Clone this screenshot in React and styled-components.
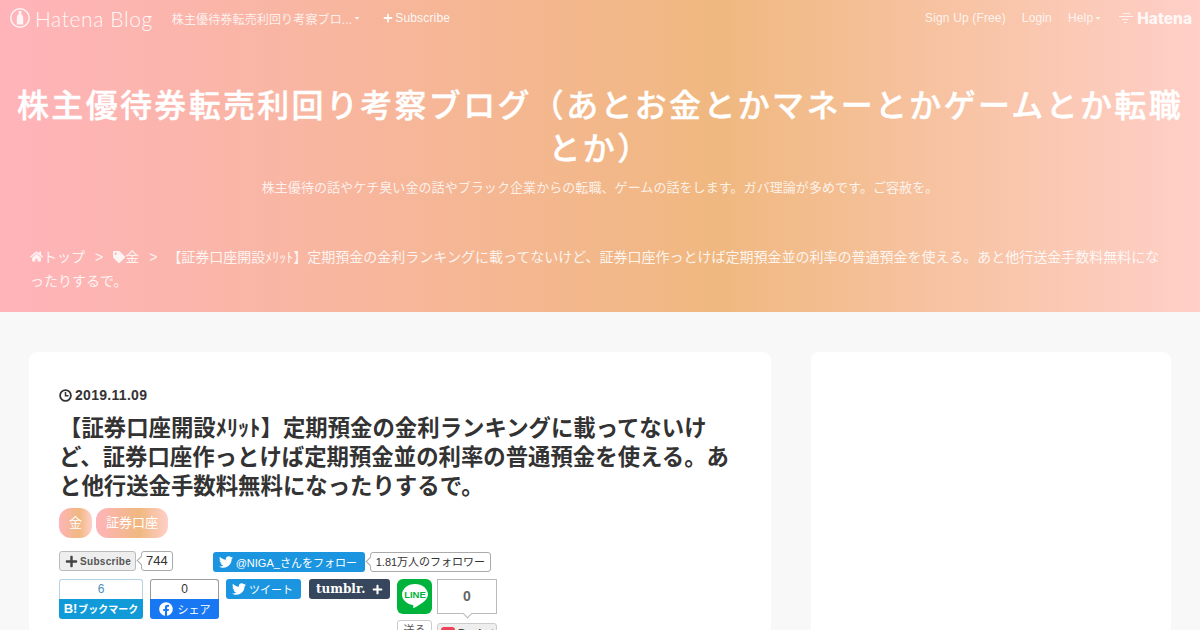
import React from 'react';
import styled, { createGlobalStyle } from 'styled-components';
import { FaTwitter, FaFacebook, FaHome, FaTag, FaPlus, FaCaretDown } from 'react-icons/fa';

const GlobalStyle = createGlobalStyle`
  html, body {
    margin: 0;
    padding: 0;
    background: #f8f8f8;
  }
  body {
    font-family: "Liberation Sans", "Noto Sans CJK JP", sans-serif;
    color: #333;
  }
`;

const App = () => {
  return (
    <Page>
      <GlobalStyle />
      <Header>
        <NavBar>
          <NavLeft>
            <BlogLogo>
              <svg width="20" height="20" viewBox="0 0 20 20">
                <circle cx="10" cy="10" r="9.200" fill="none" stroke="#fff" strokeWidth="1.500" opacity="0.85" />
                <path d="M8.600 3h2.800v3.400c1.100.7 1.800 1.700 1.800 3v7.100H6.800V9.400c0-1.300.7-2.300 1.800-3z" fill="#fff" opacity="0.85" />
              </svg>
              <LogoText>Hatena Blog</LogoText>
            </BlogLogo>
            <NavLink>
              株主優待券転売利回り考察ブロ...
              <Caret />
            </NavLink>
            <SubscribeLink>
              <FaPlus size={10} />
              Subscribe
            </SubscribeLink>
          </NavLeft>
          <NavRight>
            <NavLink>Sign Up (Free)</NavLink>
            <NavLink>Login</NavLink>
            <NavLink>
              Help
              <Caret />
            </NavLink>
            <HatenaMark>
              <svg width="16" height="13" viewBox="0 0 16 13">
                <path d="M5 1.500h7M1 4.500h14M4 7.500h6M6 10.500h3" stroke="#fff" strokeWidth="1.200" opacity="0.75" />
              </svg>
              <HatenaText>Hatena</HatenaText>
            </HatenaMark>
          </NavRight>
        </NavBar>
        <BlogTitle>株主優待券転売利回り考察ブログ（あとお金とかマネーとかゲームとか転職とか）</BlogTitle>
        <BlogDesc>株主優待の話やケチ臭い金の話やブラック企業からの転職、ゲームの話をします。ガバ理論が多めです。ご容赦を。</BlogDesc>
        <Breadcrumb>
          <span><FaHome size={13} />トップ</span>
          <Sep>&gt;</Sep>
          <span><FaTag size={12} />金</span>
          <Sep>&gt;</Sep>
          <span>【証券口座開設ﾒﾘｯﾄ】定期預金の金利ランキングに載ってないけど、証券口座作っとけば定期預金並の利率の普通預金を使える。あと他行送金手数料無料になったりするで。</span>
        </Breadcrumb>
      </Header>
      <Content>
        <Article>
          <DateRow>
            <svg width="13" height="13" viewBox="0 0 13 13">
              <circle cx="6.500" cy="6.500" r="5.400" fill="none" stroke="#333" strokeWidth="1.800" />
              <path d="M6.500 3v3.800h3" fill="none" stroke="#333" strokeWidth="1.500" />
            </svg>
            2019.11.09
          </DateRow>
          <EntryTitle>【証券口座開設ﾒﾘｯﾄ】定期預金の金利ランキングに載ってないけど、証券口座作っとけば定期預金並の利率の普通預金を使える。あと他行送金手数料無料になったりするで。</EntryTitle>
          <Tags>
            <TagPill>金</TagPill>
            <TagPill>証券口座</TagPill>
          </Tags>
          <ShareRowTop>
            <SubscribeGroup>
              <SubscribeBtn>
                <FaPlus size={13} color="#444" />
                Subscribe
              </SubscribeBtn>
              <Balloon $wide={false}>744</Balloon>
            </SubscribeGroup>
            <FollowGroup>
              <TwitterBtn>
                <FaTwitter size={14} />
                @NIGA_さんをフォロー
              </TwitterBtn>
              <Balloon $wide>1.81万人のフォロワー</Balloon>
            </FollowGroup>
          </ShareRowTop>
          <ShareRowBottom>
            <CountButton $width="84px">
              <CountTop $color="#4a8fb5" $border="#b5d5e6">6</CountTop>
              <HatebuLabel>
                <b>B!</b>ブックマーク
              </HatebuLabel>
            </CountButton>
            <CountButton $width="69px">
              <CountTop $color="#333" $border="#9a9a9a">0</CountTop>
              <FacebookLabel>
                <FaFacebook size={14} />
                シェア
              </FacebookLabel>
            </CountButton>
            <TweetBtn>
              <FaTwitter size={14} />
              ツイート
            </TweetBtn>
            <TumblrBtn>
              tumblr.
              <FaPlus size={11} />
            </TumblrBtn>
            <LineGroup>
              <LineIcon>
                <svg width="28" height="27" viewBox="0 0 28 27">
                  <path d="M14 1C6.900 1 1 5.700 1 11.500c0 5.200 4.600 9.500 10.700 10.400.9.200.8 1 .5 2.500-.1.600.3.900 1.100.4C16.900 22.800 27 17.800 27 11.500 27 5.700 21.100 1 14 1z" fill="#fff" />
                  <text x="14" y="15" textAnchor="middle" fontSize="9.500" fontWeight="700" fontFamily="Liberation Sans, sans-serif" fill="#00b33c">LINE</text>
                </svg>
              </LineIcon>
              <SendBtn>送る</SendBtn>
            </LineGroup>
            <PocketGroup>
              <PocketCount>0</PocketCount>
              <PocketBtn>
                <PocketMark />
                Pocket
              </PocketBtn>
            </PocketGroup>
          </ShareRowBottom>
        </Article>
        <Sidebar />
      </Content>
    </Page>
  );
};

export default App;

const Page = styled.div`
  width: 1200px;
  height: 630px;
  overflow: hidden;
  background: #f8f8f8;
`;
const Header = styled.header`
  height: 312px;
  box-sizing: border-box;
  background: linear-gradient(90deg, #ffb4ba 0%, #f0b880 60%, #ffcfc8 100%);
  color: #fff;
`;
const NavBar = styled.nav`
  height: 36px;
  display: flex;
  justify-content: space-between;
  align-items: center;
  padding: 0 8px 0 10px;
`;
const NavLeft = styled.div`
  display: flex;
  align-items: center;
`;
const NavRight = styled.div`
  display: flex;
  align-items: center;
  gap: 16px;
`;
const BlogLogo = styled.div`
  display: flex;
  align-items: center;
  gap: 5px;
  margin-right: 19px;
`;
const LogoText = styled.span`
  font-family: Lato, sans-serif;
  font-weight: 300;
  font-size: 21px;
  letter-spacing: 0.6px;
  opacity: 0.9;
`;
const NavLink = styled.span`
  display: flex;
  align-items: center;
  font-size: 12px;
  letter-spacing: 0.15px;
  opacity: 0.8;
  white-space: nowrap;
`;
const SubscribeLink = styled(NavLink)`
  gap: 2px;
  margin-left: 22px;
  opacity: 0.9;
`;
const Caret = styled(FaCaretDown).attrs({ size: 8 })`
  margin-left: 1px;
`;
const HatenaMark = styled.span`
  display: flex;
  align-items: center;
  gap: 3px;
`;
const HatenaText = styled.span`
  font-family: Inter, sans-serif;
  font-size: 15.500px;
  font-weight: 800;
  opacity: 0.85;
`;
const BlogTitle = styled.h1`
  margin: 49px 10px 0;
  font-size: 32px;
  line-height: 43px;
  font-weight: 500;
  -webkit-text-stroke: 0.4px #fff;
  letter-spacing: 2.320px;
  text-align: center;
`;
const BlogDesc = styled.p`
  margin: 7px 0 0;
  font-size: 13px;
  line-height: 20px;
  letter-spacing: 0.07px;
  text-align: center;
  opacity: 0.8;
`;
const Breadcrumb = styled.div`
  margin: 47px 30px 0;
  font-size: 14px;
  line-height: 24px;
  opacity: 0.85;
  svg {
    vertical-align: -1px;
  }
`;
const Sep = styled.span`
  margin: 0 10px;
`;
const Content = styled.main`
  display: flex;
  justify-content: space-between;
  padding: 40px 29px 0;
`;
const Article = styled.article`
  width: 742px;
  height: 400px;
  box-sizing: border-box;
  padding: 35px 30px 0;
  background: #fff;
  border-radius: 8px;
`;
const Sidebar = styled.aside`
  width: 360px;
  height: 400px;
  background: #fff;
  border-radius: 8px;
`;
const DateRow = styled.div`
  display: flex;
  align-items: center;
  gap: 3px;
  font-size: 14px;
  font-weight: 700;
  letter-spacing: 0.3px;
  line-height: 16px;
`;
const EntryTitle = styled.h2`
  margin: 11px 0 0;
  font-size: 22.400px;
  line-height: 29px;
  font-weight: 700;
  color: #333;
`;
const Tags = styled.div`
  display: flex;
  gap: 4px;
  margin-top: 7px;
`;
const TagPill = styled.span`
  padding: 0 10px;
  height: 30px;
  line-height: 30px;
  font-size: 13px;
  color: #fff;
  border-radius: 12px;
  background: linear-gradient(90deg, #ffb4ba 0%, #f0b880 60%, #ffcfc8 100%);
`;
const ShareRowTop = styled.div`
  display: flex;
  align-items: flex-start;
  gap: 40px;
  margin-top: 13px;
`;
const SubscribeGroup = styled.div`
  display: flex;
  align-items: center;
  gap: 5px;
`;
const FollowGroup = styled.div`
  display: flex;
  align-items: center;
  gap: 5px;
  margin-top: 1px;
`;
const SubscribeBtn = styled.span`
  display: flex;
  align-items: center;
  gap: 2px;
  box-sizing: border-box;
  width: 77px;
  height: 20px;
  padding-left: 5px;
  font-size: 10px;
  font-weight: 700;
  color: #555;
  background: #eee;
  border: 1px solid #bbb;
  border-radius: 3px;
  letter-spacing: 0.3px;
`;
const Balloon = styled.span`
  position: relative;
  box-sizing: border-box;
  height: 20px;
  padding: 0 ${p => (p.$wide ? '5px' : '4px')};
  font-size: ${p => (p.$wide ? '11px' : '13px')};
  line-height: 18px;
  color: #333;
  background: #fff;
  border: 1px solid #aaa;
  border-radius: 3px;
  white-space: nowrap;
  &::before {
    content: '';
    position: absolute;
    left: -4px;
    top: 5px;
    width: 6px;
    height: 6px;
    background: #fff;
    border-left: 1px solid #aaa;
    border-bottom: 1px solid #aaa;
    transform: rotate(45deg);
  }
`;
const TwitterBtn = styled.span`
  display: flex;
  align-items: center;
  gap: 3px;
  box-sizing: border-box;
  width: 152px;
  height: 20px;
  padding-left: 6px;
  font-size: 11px;
  color: #fff;
  background: #1b95e0;
  border-radius: 3px;
  white-space: nowrap;
`;
const ShareRowBottom = styled.div`
  display: flex;
  align-items: flex-start;
  gap: 7px;
  margin-top: 7px;
`;
const CountButton = styled.div`
  width: ${p => p.$width};
  height: 40px;
  display: flex;
  flex-direction: column;
`;
const CountTop = styled.div`
  box-sizing: border-box;
  height: 20px;
  line-height: 19px;
  text-align: center;
  font-size: 12px;
  color: ${p => p.$color};
  background: #fff;
  border: 1px solid ${p => p.$border};
  border-bottom: none;
  border-radius: 3px 3px 0 0;
`;
const HatebuLabel = styled.div`
  height: 20px;
  line-height: 20px;
  text-align: center;
  font-size: 10px;
  font-weight: 700;
  color: #fff;
  background: #119ad8;
  border-radius: 0 0 3px 3px;
  white-space: nowrap;
  b {
    font-size: 13px;
    margin-right: 1px;
  }
`;
const FacebookLabel = styled.div`
  display: flex;
  align-items: center;
  justify-content: center;
  gap: 5px;
  height: 20px;
  font-size: 11px;
  color: #fff;
  background: #1877f2;
  border-radius: 0 0 3px 3px;
`;
const TweetBtn = styled.span`
  display: flex;
  align-items: center;
  gap: 3px;
  box-sizing: border-box;
  width: 75px;
  height: 20px;
  padding-left: 6px;
  font-size: 11px;
  color: #fff;
  background: #1b95e0;
  border-radius: 3px;
`;
const TumblrBtn = styled.span`
  display: flex;
  align-items: center;
  justify-content: space-between;
  box-sizing: border-box;
  width: 81px;
  height: 20px;
  margin-left: 1px;
  padding: 0 7px;
  font-family: "DejaVu Serif", serif;
  font-weight: 700;
  font-size: 12px;
  color: #fff;
  background: #36465d;
  border-radius: 3px;
`;
const LineGroup = styled.div`
  display: flex;
  flex-direction: column;
  gap: 6px;
`;
const LineIcon = styled.div`
  width: 35px;
  height: 35px;
  display: flex;
  align-items: center;
  justify-content: center;
  background: #00b33c;
  border-radius: 6px;
`;
const SendBtn = styled.div`
  box-sizing: border-box;
  width: 35px;
  height: 20px;
  line-height: 18px;
  text-align: center;
  font-size: 11px;
  color: #555;
  background: #fff;
  border: 1px solid #ccc;
  border-radius: 3px;
`;
const PocketGroup = styled.div`
  display: flex;
  flex-direction: column;
  gap: 9px;
  margin-left: -2px;
`;
const PocketCount = styled.div`
  position: relative;
  box-sizing: border-box;
  width: 60px;
  height: 35px;
  line-height: 33px;
  text-align: center;
  font-size: 14px;
  font-weight: 700;
  color: #666;
  background: #fff;
  border: 1px solid #bbb;
  &::after {
    content: '';
    position: absolute;
    left: 26px;
    bottom: -4px;
    width: 6px;
    height: 6px;
    background: #fff;
    border-right: 1px solid #bbb;
    border-bottom: 1px solid #bbb;
    transform: rotate(45deg);
  }
`;
const PocketBtn = styled.div`
  display: flex;
  align-items: center;
  gap: 3px;
  box-sizing: border-box;
  width: 60px;
  height: 20px;
  padding-left: 3px;
  font-size: 11px;
  font-weight: 700;
  color: #444;
  background: #eee;
  border: 1px solid #ccc;
  border-radius: 3px;
`;
const PocketMark = styled.span`
  width: 14px;
  height: 12px;
  background: #ee4056;
  border-radius: 3px;
`;
